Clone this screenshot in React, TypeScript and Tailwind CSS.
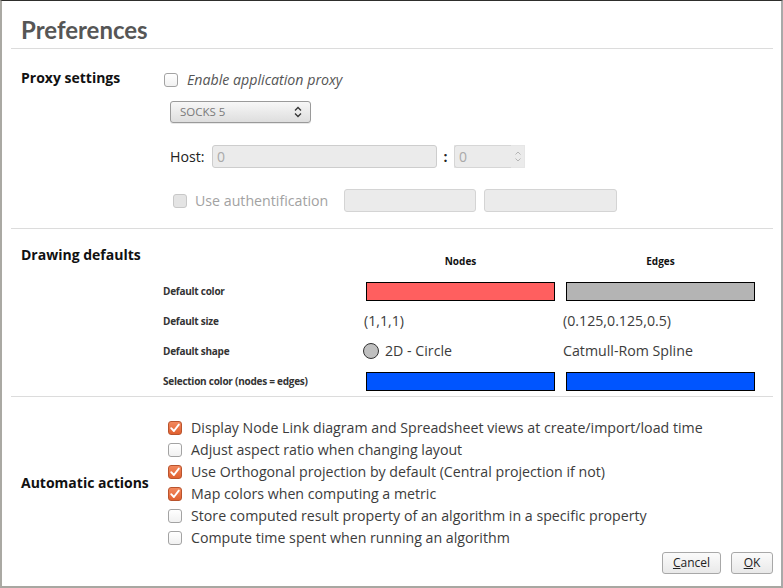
import React from "react";

const font = { fontFamily: "'Open Sans', Lato, sans-serif" };
const titleFont = { fontFamily: "Lato, 'Open Sans', sans-serif" };

function Check({ checked, disabled }: { checked?: boolean; disabled?: boolean }) {
  if (checked) {
    return (
      <span className="flex h-[14px] w-[14px] shrink-0 items-center justify-center rounded-[3px] border border-[#b9542e] bg-gradient-to-b from-[#f2885d] to-[#e0602f]">
        <svg width="12" height="12" viewBox="0 0 12 12">
          <path d="M2.2 6.2 L4.9 9 L9.8 2.6" fill="none" stroke="#fff" strokeWidth="1.9" strokeLinecap="round" strokeLinejoin="round" />
        </svg>
      </span>
    );
  }
  return (
    <span
      className={
        "block h-[14px] w-[14px] shrink-0 rounded-[3px] border " +
        (disabled ? "border-[#c8c8c8] bg-[#e4e4e4]" : "border-[#a3a3a3] bg-gradient-to-b from-[#ffffff] to-[#f1f1f1]")
      }
    />
  );
}

function Divider() {
  return <div className="h-px bg-[#dcdcdc]" />;
}

function Swatch({ color }: { color: string }) {
  return <div className="h-[19px] w-[189px] border border-black" style={{ background: color }} />;
}

export default function App() {
  const actions: [string, boolean][] = [
    ["Display Node Link diagram and Spreadsheet views at create/import/load time", true],
    ["Adjust aspect ratio when changing layout", false],
    ["Use Orthogonal projection by default (Central projection if not)", true],
    ["Map colors when computing a metric", true],
    ["Store computed result property of an algorithm in a specific property", false],
    ["Compute time spent when running an algorithm", false],
  ];
  return (
    <div
      className="relative h-[588px] w-[783px] overflow-hidden border-t border-l-2 border-r-2 border-b-2 border-t-[#2e2e2c] border-l-[#aaa9a3] border-r-[#a9a9a9] border-b-[#a8a7a1] bg-white text-[#3c3c3c]"
      style={font}
    >
      <div className="absolute right-[-2px] top-[-1px] h-[28px] w-[2px] bg-[#3a3a38]" />
      <div className="pl-[9px] pr-[8px]">
        {/* Title */}
        <div className="flex h-[47px] items-start pl-[10px] pt-[15px]">
          <h1 className="text-[24px] font-bold leading-[28px] text-[#565656]" style={titleFont}>Preferences</h1>
        </div>
        <Divider />

        {/* Proxy */}
        <div className="flex h-[179px]">
          <div className="w-[153px] pl-[10px] pt-[20px]">
            <div className="text-[14px] font-bold leading-[18px] text-[#111]">Proxy settings</div>
          </div>
          <div className="flex flex-col pt-[21px]">
            <div className="flex h-[20px] items-center gap-[9px]">
              <Check />
              <span className="text-[14.2px] italic text-[#555]">Enable application proxy</span>
            </div>
            <div className="ml-[6px] mt-[11px] flex h-[22px] w-[141px] items-center justify-between rounded-[3px] border border-[#9a9a9a] bg-gradient-to-b from-[#f7f7f7] to-[#dedede] pl-[9px] pr-[8px] shadow-[0_1px_0_#e8e8e8]">
              <span className="text-[11.5px] text-[#7a7a7a]">SOCKS 5</span>
              <svg width="8" height="12" viewBox="0 0 8 12">
                <path d="M1 4.5 L4 1.5 L7 4.5 M1 7.5 L4 10.5 L7 7.5" fill="none" stroke="#333" strokeWidth="1.3" />
              </svg>
            </div>
            <div className="ml-[6px] mt-[22px] flex h-[23px] items-center">
              <span className="w-[42px] text-[14.2px] text-[#222]">Host:</span>
              <div className="flex h-[23px] w-[225px] items-center rounded-[3px] border border-[#cdcdcd] bg-[#ebebeb] pl-[4px] text-[14px] text-[#a9a9a9]">0</div>
              <span className="w-[17px] text-center text-[14px] font-bold text-[#222]">:</span>
              <div className="flex h-[23px] w-[71px] items-center bg-[#ebebeb] text-[14px] text-[#a9a9a9]">
                <div className="flex h-[23px] flex-1 items-center rounded-l-[3px] border border-r-0 border-[#d6d6d6] pl-[4px]">0</div>
                <div className="flex h-[23px] w-[14px] flex-col items-center justify-center gap-[3px] border border-l-0 border-[#e6e6e6]">
                  <svg width="6" height="4" viewBox="0 0 6 4"><path d="M0.5 3.5 L3 1 L5.5 3.5" fill="none" stroke="#b5b5b5" strokeWidth="1" /></svg>
                  <svg width="6" height="4" viewBox="0 0 6 4"><path d="M0.5 0.5 L3 3 L5.5 0.5" fill="none" stroke="#b5b5b5" strokeWidth="1" /></svg>
                </div>
              </div>
            </div>
            <div className="ml-[9px] mt-[21px] flex h-[23px] items-center">
              <Check disabled />
              <span className="ml-[8px] w-[149px] text-[14.2px] text-[#a2a2a2]">Use authentification</span>
              <div className="h-[23px] w-[132px] rounded-[3px] border border-[#d4d4d4] bg-[#ebebeb]" />
              <div className="ml-[8px] h-[23px] w-[133px] rounded-[3px] border border-[#d4d4d4] bg-[#ebebeb]" />
            </div>
          </div>
        </div>
        <Divider />

        {/* Drawing defaults */}
        <div className="flex h-[167px]">
          <div className="w-[152px] pl-[10px] pt-[17px]">
            <div className="text-[14px] font-bold leading-[18px] text-[#111]">Drawing defaults</div>
          </div>
          <div className="pt-[17px]">
            <div className="grid grid-cols-[192px_189px_189px] grid-rows-[30px_30px_30px_30px_30px] gap-x-[11px] text-[14.2px]">
              <div />
              <div className="flex items-center justify-center pt-[1px] text-[10px] font-bold text-[#111]">Nodes</div>
              <div className="flex items-center justify-center pt-[1px] text-[10px] font-bold text-[#111]">Edges</div>

              <div className="flex items-center pt-[1px] text-[10px] font-bold tracking-[-0.25px] text-[#333]">Default color</div>
              <div className="flex items-center"><Swatch color="#ff5f5f" /></div>
              <div className="flex items-center"><Swatch color="#b4b4b4" /></div>

              <div className="flex items-center pt-[1px] text-[10px] font-bold tracking-[-0.25px] text-[#333]">Default size</div>
              <div className="-ml-[2px] flex items-center">(1,1,1)</div>
              <div className="-ml-[3px] flex items-center">(0.125,0.125,0.5)</div>

              <div className="flex items-center pt-[1px] text-[10px] font-bold tracking-[-0.25px] text-[#333]">Default shape</div>
              <div className="-ml-[3px] flex items-center gap-[6px]">
                <span className="block h-[16px] w-[16px] rounded-full border border-[#333] bg-[#c0c0c0]" />
                <span>2D - Circle</span>
              </div>
              <div className="-ml-[3px] flex items-center">Catmull-Rom Spline</div>

              <div className="flex items-center pt-[1px] text-[10px] font-bold tracking-[-0.25px] text-[#333]">Selection color (nodes = edges)</div>
              <div className="flex items-center"><Swatch color="#0055ff" /></div>
              <div className="flex items-center"><Swatch color="#0055ff" /></div>
            </div>
          </div>
        </div>
        <Divider />

        {/* Automatic actions */}
        <div className="flex">
          <div className="flex w-[157px] items-center pl-[10px] pt-[20px]">
            <div className="text-[14px] font-bold leading-[18px] text-[#111]">Automatic actions</div>
          </div>
          <div className="flex flex-col pt-[20px]">
            {actions.map(([label, on]) => (
              <div key={label} className="flex h-[22px] items-center gap-[9px]">
                <Check checked={on} />
                <span className="text-[14.2px]">{label}</span>
              </div>
            ))}
          </div>
        </div>
        <div className="mt-[3px] flex justify-end gap-[10px]">
          <button className="flex h-[22px] w-[59px] items-center justify-center rounded-[3px] border border-[#a8a8a8] bg-gradient-to-b from-[#fbfbfb] to-[#e9e9e9] text-[12px] text-[#222]">
            <span><span className="underline">C</span>ancel</span>
          </button>
          <button className="flex h-[22px] w-[42px] items-center justify-center rounded-[3px] border border-[#a8a8a8] bg-gradient-to-b from-[#fbfbfb] to-[#e9e9e9] text-[12px] text-[#222]">
            <span><span className="underline">O</span>K</span>
          </button>
        </div>
      </div>
    </div>
  );
}
